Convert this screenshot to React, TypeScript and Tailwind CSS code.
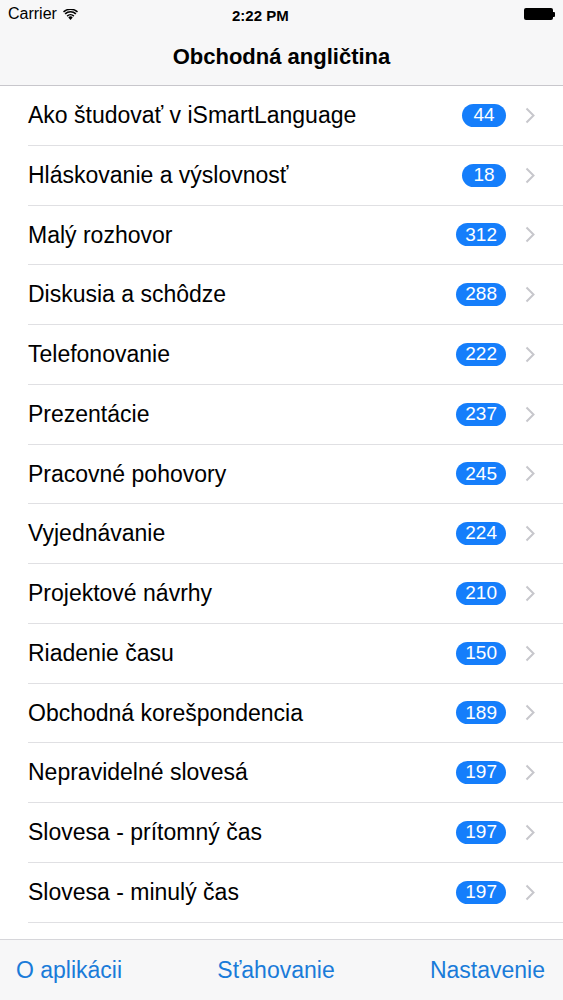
import React from 'react';

const ROWS: [string, number][] = [
  ['Ako študovať v iSmartLanguage', 44],
  ['Hláskovanie a výslovnosť', 18],
  ['Malý rozhovor', 312],
  ['Diskusia a schôdze', 288],
  ['Telefonovanie', 222],
  ['Prezentácie', 237],
  ['Pracovné pohovory', 245],
  ['Vyjednávanie', 224],
  ['Projektové návrhy', 210],
  ['Riadenie času', 150],
  ['Obchodná korešpondencia', 189],
  ['Nepravidelné slovesá', 197],
  ['Slovesa - prítomný čas', 197],
  ['Slovesa - minulý čas', 197],
];

const Wifi = () => (
  <svg width="15" height="11" viewBox="0 0 15 11" className="ml-[6px]">
    <path d="M7.5 11 L5.3 8.4 A3.2 3.2 0 0 1 9.7 8.4 Z" fill="#000" />
    <path d="M3.6 6.5 A5.6 5.6 0 0 1 11.4 6.5 L10.3 7.7 A4 4 0 0 0 4.7 7.7 Z" fill="#000" />
    <path d="M1.6 4.3 A8.6 8.6 0 0 1 13.4 4.3 L12.3 5.5 A7 7 0 0 0 2.7 5.5 Z" fill="#000" />
    <path d="M0 2.3 A11.3 11.3 0 0 1 15 2.3 L14 3.4 A9.8 9.8 0 0 0 1 3.4 Z" fill="#000" />
  </svg>
);

const Battery = () => (
  <div className="flex items-center">
    <div className="w-[29px] h-[12px] rounded-[2px] bg-black" />
    <div className="w-[2px] h-[5px] bg-black rounded-r-[1px]" />
  </div>
);

const Chevron = () => (
  <svg width="10" height="17" viewBox="0 0 10 17">
    <path d="M1.5 1.5 L8.5 8.5 L1.5 15.5" fill="none" stroke="#c7c7cc" strokeWidth="2" />
  </svg>
);

const App: React.FC = () => {
  return (
    <div className="relative h-[1000px] w-[563px] overflow-hidden bg-white font-['Liberation_Sans',sans-serif] text-black">
      {/* Status + nav bar */}
      <div className="relative bg-[#f7f7f8] border-b border-[#c8c7cc]">
        <div className="h-[28px] flex items-center justify-between px-[8px] text-[16px]">
          <div className="flex items-center">
            <span>Carrier</span>
            <Wifi />
          </div>
          <span className="absolute left-[232px] top-[5px] text-[15px] font-bold">2:22 PM</span>
          <Battery />
        </div>
        <div className="h-[57px] flex items-center justify-center text-[22px] font-bold">
          Obchodná angličtina
        </div>
      </div>

      {/* List */}
      <div>
        {ROWS.map(([label, count]) => (
          <div key={label} className="h-[59.75px] pl-[28px] flex">
            <div className="flex-1 flex items-center border-b border-[#e0e0e3] pr-[28px]">
              <span className="flex-1 text-[23px]">{label}</span>
              <span className="h-[23px] min-w-[44px] px-[9px] rounded-full bg-[#157efb] text-white text-[19px] flex items-center justify-center">
                {count}
              </span>
              <span className="ml-[19px] flex items-center">
                <Chevron />
              </span>
            </div>
          </div>
        ))}
      </div>

      {/* Toolbar */}
      <div className="absolute bottom-0 left-0 right-0 h-[61px] bg-[#f7f7f8] border-t border-[#d6d6da] flex items-center justify-between pl-[16px] pr-[18px] text-[23px] text-[#1a7bd9]">
        <span>O aplikácii</span>
        <span>Sťahovanie</span>
        <span>Nastavenie</span>
      </div>
    </div>
  );
};

export default App;
